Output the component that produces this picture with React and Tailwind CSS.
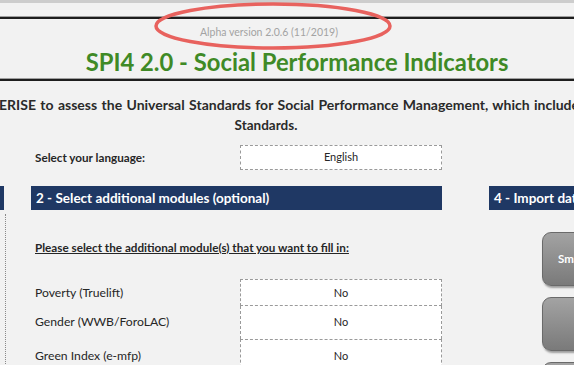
export default function App() {
  const font = { fontFamily: "Lato, 'Liberation Sans', sans-serif" };
  return (
    <div className="relative w-[574px] h-[365px] overflow-hidden bg-[#f2f2f2] text-[#262626]" style={font}>
      {/* top band */}
      <div className="h-[3px] bg-[#cdcdcd]" />
      <div className="h-[13px]" />
      <div className="h-[1px] bg-[#a0a0a0]" />
      <div className="h-[2px] bg-[#1e1e1e]" />
      {/* header area */}
      <div className="h-[59px] flex flex-col items-center">
        <div className="mt-[7px] h-[13px] text-[10.5px] leading-[13px] text-[#a3a3a3] pr-[36px]">Alpha version 2.0.6 (11/2019)</div>
        <div className="mt-[9px] text-[23.8px] leading-[28px] font-bold text-[#3f8a26] pl-[20px]">SPI4 2.0 - Social Performance Indicators</div>
      </div>
      <div className="h-[1px] bg-[#a0a0a0]" />
      <div className="h-[2px] bg-[#1e1e1e]" />
      {/* description */}
      <div className="mt-[13px] text-[14px] leading-[21px] font-bold text-[#2a2a2a]">
        <div className="whitespace-nowrap -ml-[1px] [word-spacing:1px]">ERISE to assess the Universal Standards for Social Performance Management, which includes the Client Protection</div>
        <div className="w-[532px] text-center text-[13.5px]">Standards.</div>
      </div>
      {/* main area */}
      <div className="mt-[9px] flex">
        {/* left stub */}
        <div className="w-[31px] shrink-0">
          <div className="h-[41px]" />
          <div className="w-[4px] h-[24px] bg-[#1f3864]" />
          <div className="mt-[4px] w-[6px] h-[200px] border-r border-dotted border-[#8a8a8a]" />
        </div>
        {/* middle */}
        <div className="w-[411px] shrink-0">
          <div className="flex items-center h-[25px]">
            <div className="w-[209px] pl-[4px] text-[11.7px] font-bold">Select your language:</div>
            <div className="w-[202px] h-[25px] bg-white border border-dashed border-[#9a9a9a] flex items-center justify-center text-[11px]">English</div>
          </div>
          <div className="mt-[16px] h-[24px] bg-[#1f3864] text-white font-bold text-[13.5px] flex items-center pl-[5px]">2 - Select additional modules (optional)</div>
          <div className="mt-[30px] pl-[4px] text-[11.7px] leading-[14px] font-bold underline">Please select the additional module(s) that you want to fill in:</div>
          <div className="mt-[25px] flex">
            <div className="w-[209px] pl-[4px] text-[12.2px] flex flex-col">
              <div className="h-[27px] flex items-center pt-[1px]">Poverty (Truelift)</div>
              <div className="h-[33px] flex items-center">Gender (WWB/ForoLAC)</div>
              <div className="h-[34px] flex items-center">Green Index (e-mfp)</div>
            </div>
            <div className="w-[202px] bg-white flex flex-col text-[11px]">
              <div className="h-[27px] border border-dashed border-[#9a9a9a] flex items-center justify-center pt-[1px]">No</div>
              <div className="h-[33px] border-x border-dashed border-[#9a9a9a] flex items-center justify-center">No</div>
              <div className="h-[34px] border border-dashed border-[#9a9a9a] flex items-center justify-center">No</div>
            </div>
          </div>
        </div>
        {/* right */}
        <div className="ml-[47px] flex-1">
          <div className="h-[41px]" />
          <div className="h-[24px] bg-[#1f3864] text-white font-bold text-[13.5px] flex items-center pl-[5px] whitespace-nowrap overflow-hidden">4 - Import data</div>
          <div className="ml-[53px] mt-[22px] flex flex-col gap-[11px]">
            <div className="w-[80px] h-[54px] rounded-[9px] bg-gradient-to-b from-[#a3a3a3] to-[#7a7a7a] border border-[#6a6a6a] shadow-[1px_2px_2px_rgba(0,0,0,0.35)] flex items-center pl-[15px] text-white font-bold text-[11.5px] whitespace-nowrap">Smart Import</div>
            <div className="w-[80px] h-[54px] rounded-[9px] bg-gradient-to-b from-[#a3a3a3] to-[#7a7a7a] border border-[#6a6a6a] shadow-[1px_2px_2px_rgba(0,0,0,0.35)]" />
            <div className="w-[80px] h-[54px] rounded-[9px] bg-gradient-to-b from-[#a3a3a3] to-[#7a7a7a] border border-[#6a6a6a]" />
          </div>
        </div>
      </div>
      {/* annotation ellipse */}
      <svg className="absolute left-0 top-0 pointer-events-none" width="574" height="365">
        <ellipse cx="273" cy="26" rx="117" ry="22" fill="none" stroke="#e8625e" strokeWidth="3.5" />
      </svg>
    </div>
  );
}
